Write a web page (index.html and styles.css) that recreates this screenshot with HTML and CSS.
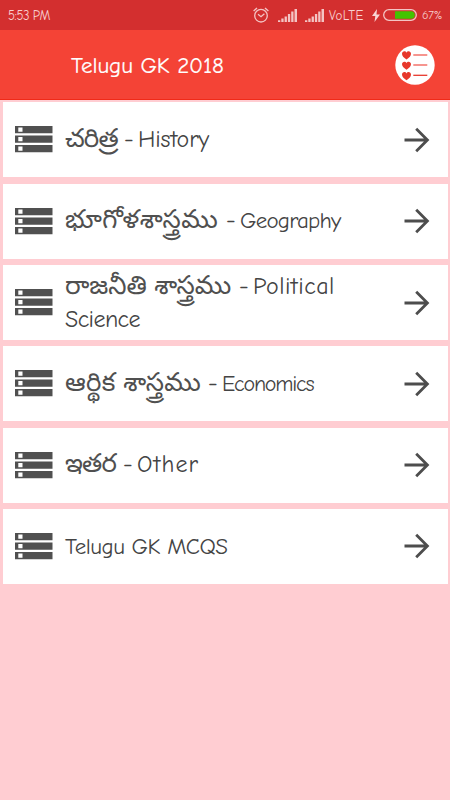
FILE: index.html
```html
<!DOCTYPE html>
<html lang="te">
<head>
<meta charset="utf-8">
<title>Telugu GK 2018</title>
<link rel="stylesheet" href="styles.css">
</head>
<body>
<svg class="defs" aria-hidden="true">
  <symbol id="list" viewBox="0 0 38 27"><path fill="#505050" d="M0 0h37.500v7.300H0zM0 9.400h37.500v7.300H0zM0 18.900h37.500v7.300H0z"/><path fill="#fff" d="M3.300 1.500h4.200v4.300h-4.200zM3.300 11h4.200v4.300h-4.200zM3.300 20.500h4.200v4.300h-4.200z"/></symbol>
  <symbol id="arrow" viewBox="0 0 26 26"><path fill="none" stroke="#4d4d4d" stroke-width="2.800" d="M.5 13h23M12.200 1.800 23.400 13 12.200 24.200"/></symbol>
  <symbol id="signal" viewBox="0 0 19 13"><path fill="#f4c4c4" d="M0 11.300h2.300V13H0zM3.300 9.500h2.300V13H3.300zM6.600 7.500h2.300V13H6.600zM9.900 5h2.300v8H9.900zM13.200 2.500h2.300V13h-2.300zM16.500 0H19v13h-2.500z"/></symbol>
</svg>
<div class="status">
  <span class="time">5:53 PM</span>
  <svg class="alarm" viewBox="0 0 16 16"><g fill="none" stroke="#f4c4c4" stroke-width="1.300"><circle cx="8" cy="8.700" r="6.300"/><path d="M.6 4 4 .9M15.400 4 12 .9M5 7.300l3 2.400 3.400-3"/></g></svg>
  <svg class="sig one"><use href="#signal"/></svg>
  <svg class="sig two"><use href="#signal"/></svg>
  <span class="volte">VoLTE</span>
  <svg class="bolt" viewBox="0 0 8 13"><path fill="#f9d4d4" d="M5 0 0 7h3.300L2.500 13 8 5.500H4.500z"/></svg>
  <svg class="battery" viewBox="0 0 34 12"><rect x=".7" y=".7" width="32.600" height="10.600" rx="5.300" fill="none" stroke="#f4c4c4" stroke-width="1.300"/><path fill="#44c300" d="M12 2.200h16a3.800 3.800 0 0 1 0 7.600H12z"/></svg>
  <span class="pct">67%</span>
</div>
<header class="bar">
  <h1>Telugu GK 2018</h1>
  <svg class="fav" viewBox="0 0 40 40"><circle cx="20" cy="20" r="19.700" fill="#fff"/>
    <g fill="#e7382c"><path id="h" d="M11.500 14.500C8.500 12.500 7 11 7 8.800 7 6 10.500 5.500 11.500 7.700 12.500 5.500 16 6 16 8.800 16 11 14.500 12.500 11.500 14.500Z"/><use href="#h" y="10.300"/><use href="#h" y="20.700"/></g>
    <path stroke="#f4736b" stroke-width="1.500" d="M18.300 10h14M18.300 20h14"/><path stroke="#e7382c" stroke-width="1.300" d="M18.300 30.300h14"/></svg>
</header>
<main class="list">
  <a class="row"><svg class="ic"><use href="#list"/></svg><span class="label history"><span class="te">చరిత్ర</span><span class="dash">-</span><span class="en">History</span></span><svg class="go"><use href="#arrow"/></svg></a>
  <a class="row"><svg class="ic"><use href="#list"/></svg><span class="label geography"><span class="te">భూగోళశాస్త్రము</span><span class="dash">-</span><span class="en">Geography</span></span><svg class="go"><use href="#arrow"/></svg></a>
  <a class="row"><svg class="ic"><use href="#list"/></svg><span class="label political"><span class="te">రాజనీతి శాస్త్రము</span><span class="dash">-</span><span class="en">Political</span><br><span class="science">Science</span></span><svg class="go"><use href="#arrow"/></svg></a>
  <a class="row"><svg class="ic"><use href="#list"/></svg><span class="label economics"><span class="te">ఆర్థిక శాస్త్రము</span><span class="dash">-</span><span class="en">Economics</span></span><svg class="go"><use href="#arrow"/></svg></a>
  <a class="row"><svg class="ic"><use href="#list"/></svg><span class="label other"><span class="te">ఇతర</span><span class="dash">-</span><span class="en">Other</span></span><svg class="go"><use href="#arrow"/></svg></a>
  <a class="row"><svg class="ic"><use href="#list"/></svg><span class="label mcqs"><span class="en">Telugu GK MCQS</span></span><svg class="go"><use href="#arrow"/></svg></a>
</main>
</body>
</html>
```

FILE: styles.css
```css
* { box-sizing: border-box; }
body { margin: 0; min-height: 800px; background: #ffcdd2; color: #444; font-family: "Comic Neue", "Comic Sans MS", cursive; }
svg { display: block; flex: none; }
.defs { width: 0; height: 0; position: absolute; }
.status { height: 30px; background: #d32f2f; color: #f8d0d0; display: flex; align-items: center; padding-left: 8px; font-size: 13px; line-height: 30px; white-space: nowrap; }
.time { width: 245px; letter-spacing: -.5px; padding-top: 2px; }
.alarm { width: 16px; height: 16px; }
.sig { width: 19px; height: 13px; }
.one { margin-left: 9px; }
.two { margin-left: 8px; }
.volte { margin-left: 5px; width: 39px; letter-spacing: .3px; padding-top: 2px; }
.bolt { width: 8px; height: 13px; margin-left: 4px; }
.battery { width: 34px; height: 12px; margin-left: 3px; }
.pct { margin-left: 5px; font-size: 12px; letter-spacing: -.2px; }
.bar { height: 70px; background: #f44336; border-bottom: 1px solid #f02a18; display: flex; align-items: center; justify-content: space-between; padding: 0 15px 0 71px; color: #fff; }
h1 { margin: 0; padding-top: 2px; font-size: 23px; line-height: 30px; font-weight: 400; letter-spacing: -.1px; -webkit-text-stroke: .2px #fff; }
.fav { width: 40px; height: 40px; }
.list { padding: 2.4px 2.5px 0; display: grid; gap: 6.2px; }
.row { height: 75.1px; background: #fff; display: flex; align-items: center; padding: 0 18px 0 12.5px; }
.ic { width: 38px; height: 27px; }
.label { flex: 1; margin-left: 12px; padding-top: 1px; font-size: 24px; line-height: 30px; white-space: nowrap; }
.te { display: inline-block; font-family: "Noto Sans Telugu", "Noto Sans", sans-serif; font-size: 26px; font-weight: 400; line-height: 30px; color: #505050; }
.dash { display: inline-block; width: 20px; padding-left: 6px; }
.history .te { width: 53px; letter-spacing: -.9px; }
.history .en { letter-spacing: -.1px; }
.geography .te { width: 155px; letter-spacing: .5px; }
.geography .en { font-size: 23px; letter-spacing: -.8px; }
.political { padding-top: 0; }
.political .te { width: 168px; letter-spacing: 0; }
.political .en { letter-spacing: .5px; }
.science { letter-spacing: -.6px; }
.economics .te { width: 137px; letter-spacing: .3px; }
.economics .en { font-size: 22px; letter-spacing: -1.2px; }
.other .te { width: 52px; letter-spacing: -.8px; }
.other .en { letter-spacing: 1.1px; }
.mcqs .en { font-size: 23px; letter-spacing: -.5px; }
.go { width: 26px; height: 26px; }
```
